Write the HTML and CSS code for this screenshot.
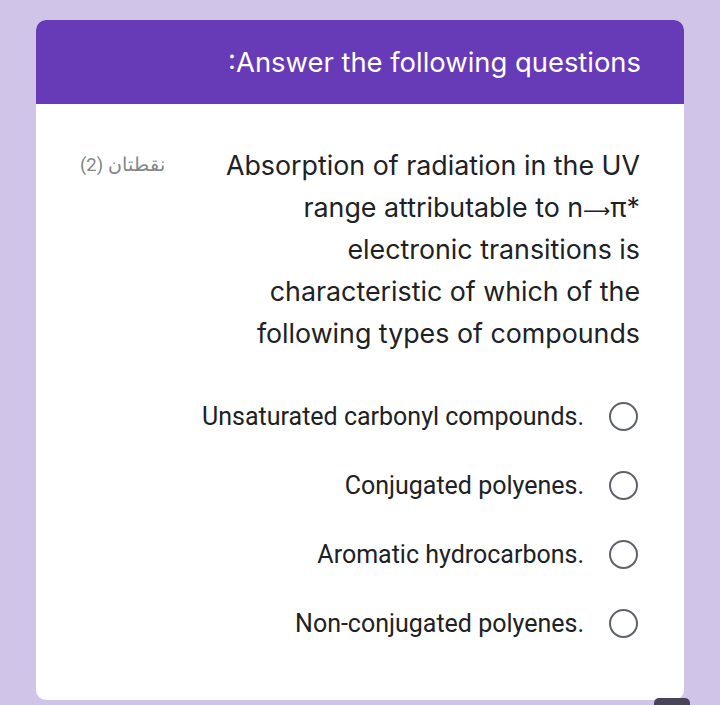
FILE: index.html
```html
<!DOCTYPE html>
<html lang="en">
<head>
<meta charset="utf-8">
<link rel="stylesheet" href="styles.css">
</head>
<body>
<div class="card">
  <div class="card-header">
    <h1 class="form-title">:Answer the following questions</h1>
  </div>
  <div class="card-body">
    <div class="question-row">
      <div class="points">(2) نقطتان</div>
      <div class="question">Absorption of radiation in the UV range attributable to n<span class="arrow">⟶</span>π* electronic transitions is characteristic of which of the following types of compounds</div>
    </div>
    <ul class="options">
      <li class="option"><span class="option-label">Unsaturated carbonyl compounds.</span><span class="radio"></span></li>
      <li class="option"><span class="option-label">Conjugated polyenes.</span><span class="radio"></span></li>
      <li class="option"><span class="option-label">Aromatic hydrocarbons.</span><span class="radio"></span></li>
      <li class="option"><span class="option-label">Non-conjugated polyenes.</span><span class="radio"></span></li>
    </ul>
  </div>
  <div class="corner-tab"></div>
</div>
</body>
</html>
```

FILE: styles.css
```css
html, body {
  margin: 0;
  padding: 0;
}
body {
  background: #d1c4e9;
  width: 720px;
  height: 705px;
  overflow: hidden;
  font-family: "Inter", "Liberation Sans", sans-serif;
}
.card {
  position: relative;
  margin: 20px 0 0 36px;
  width: 648px;
  border-radius: 10px;
  background: #ffffff;
}
.card-header {
  height: 84px;
  background: #673ab7;
  border-radius: 10px 10px 0 0;
  display: flex;
  align-items: center;
  justify-content: flex-end;
  padding-right: 43px;
}
.form-title {
  margin: 0;
  color: #ffffff;
  font-weight: 400;
  font-size: 27.4px;
  letter-spacing: 0;
}
.card-body {
  padding: 40px 44px 42px 44px;
}
.question-row {
  display: flex;
  justify-content: space-between;
  align-items: flex-start;
}
.points {
  font-family: "Roboto", "Noto Sans", sans-serif;
  color: #80868b;
  font-size: 18.5px;
  line-height: 42px;
  white-space: nowrap;
}
.question {
  width: 420px;
  text-align: right;
  color: #202124;
  font-size: 26.8px;
  line-height: 42px;
}
.arrow {
  font-family: "DejaVu Sans", sans-serif;
  font-weight: 400;
  font-size: 19px;
  line-height: 1;
}
.options {
  list-style: none;
  margin: 28px 0 0 0;
  padding: 0;
}
.option {
  height: 69px;
  display: flex;
  align-items: center;
  justify-content: flex-end;
  gap: 25px;
}
.option-label {
  font-family: "Roboto", sans-serif;
  font-size: 25px;
  color: #202124;
}
.radio {
  width: 25px;
  height: 25px;
  border: 2.75px solid #5f6368;
  border-radius: 50%;
  margin-right: 2px;
}
.corner-tab {
  position: absolute;
  right: -6px;
  bottom: -8px;
  width: 36px;
  height: 10px;
  background: #4a4458;
  border-radius: 5px 5px 0 0;
}
```
